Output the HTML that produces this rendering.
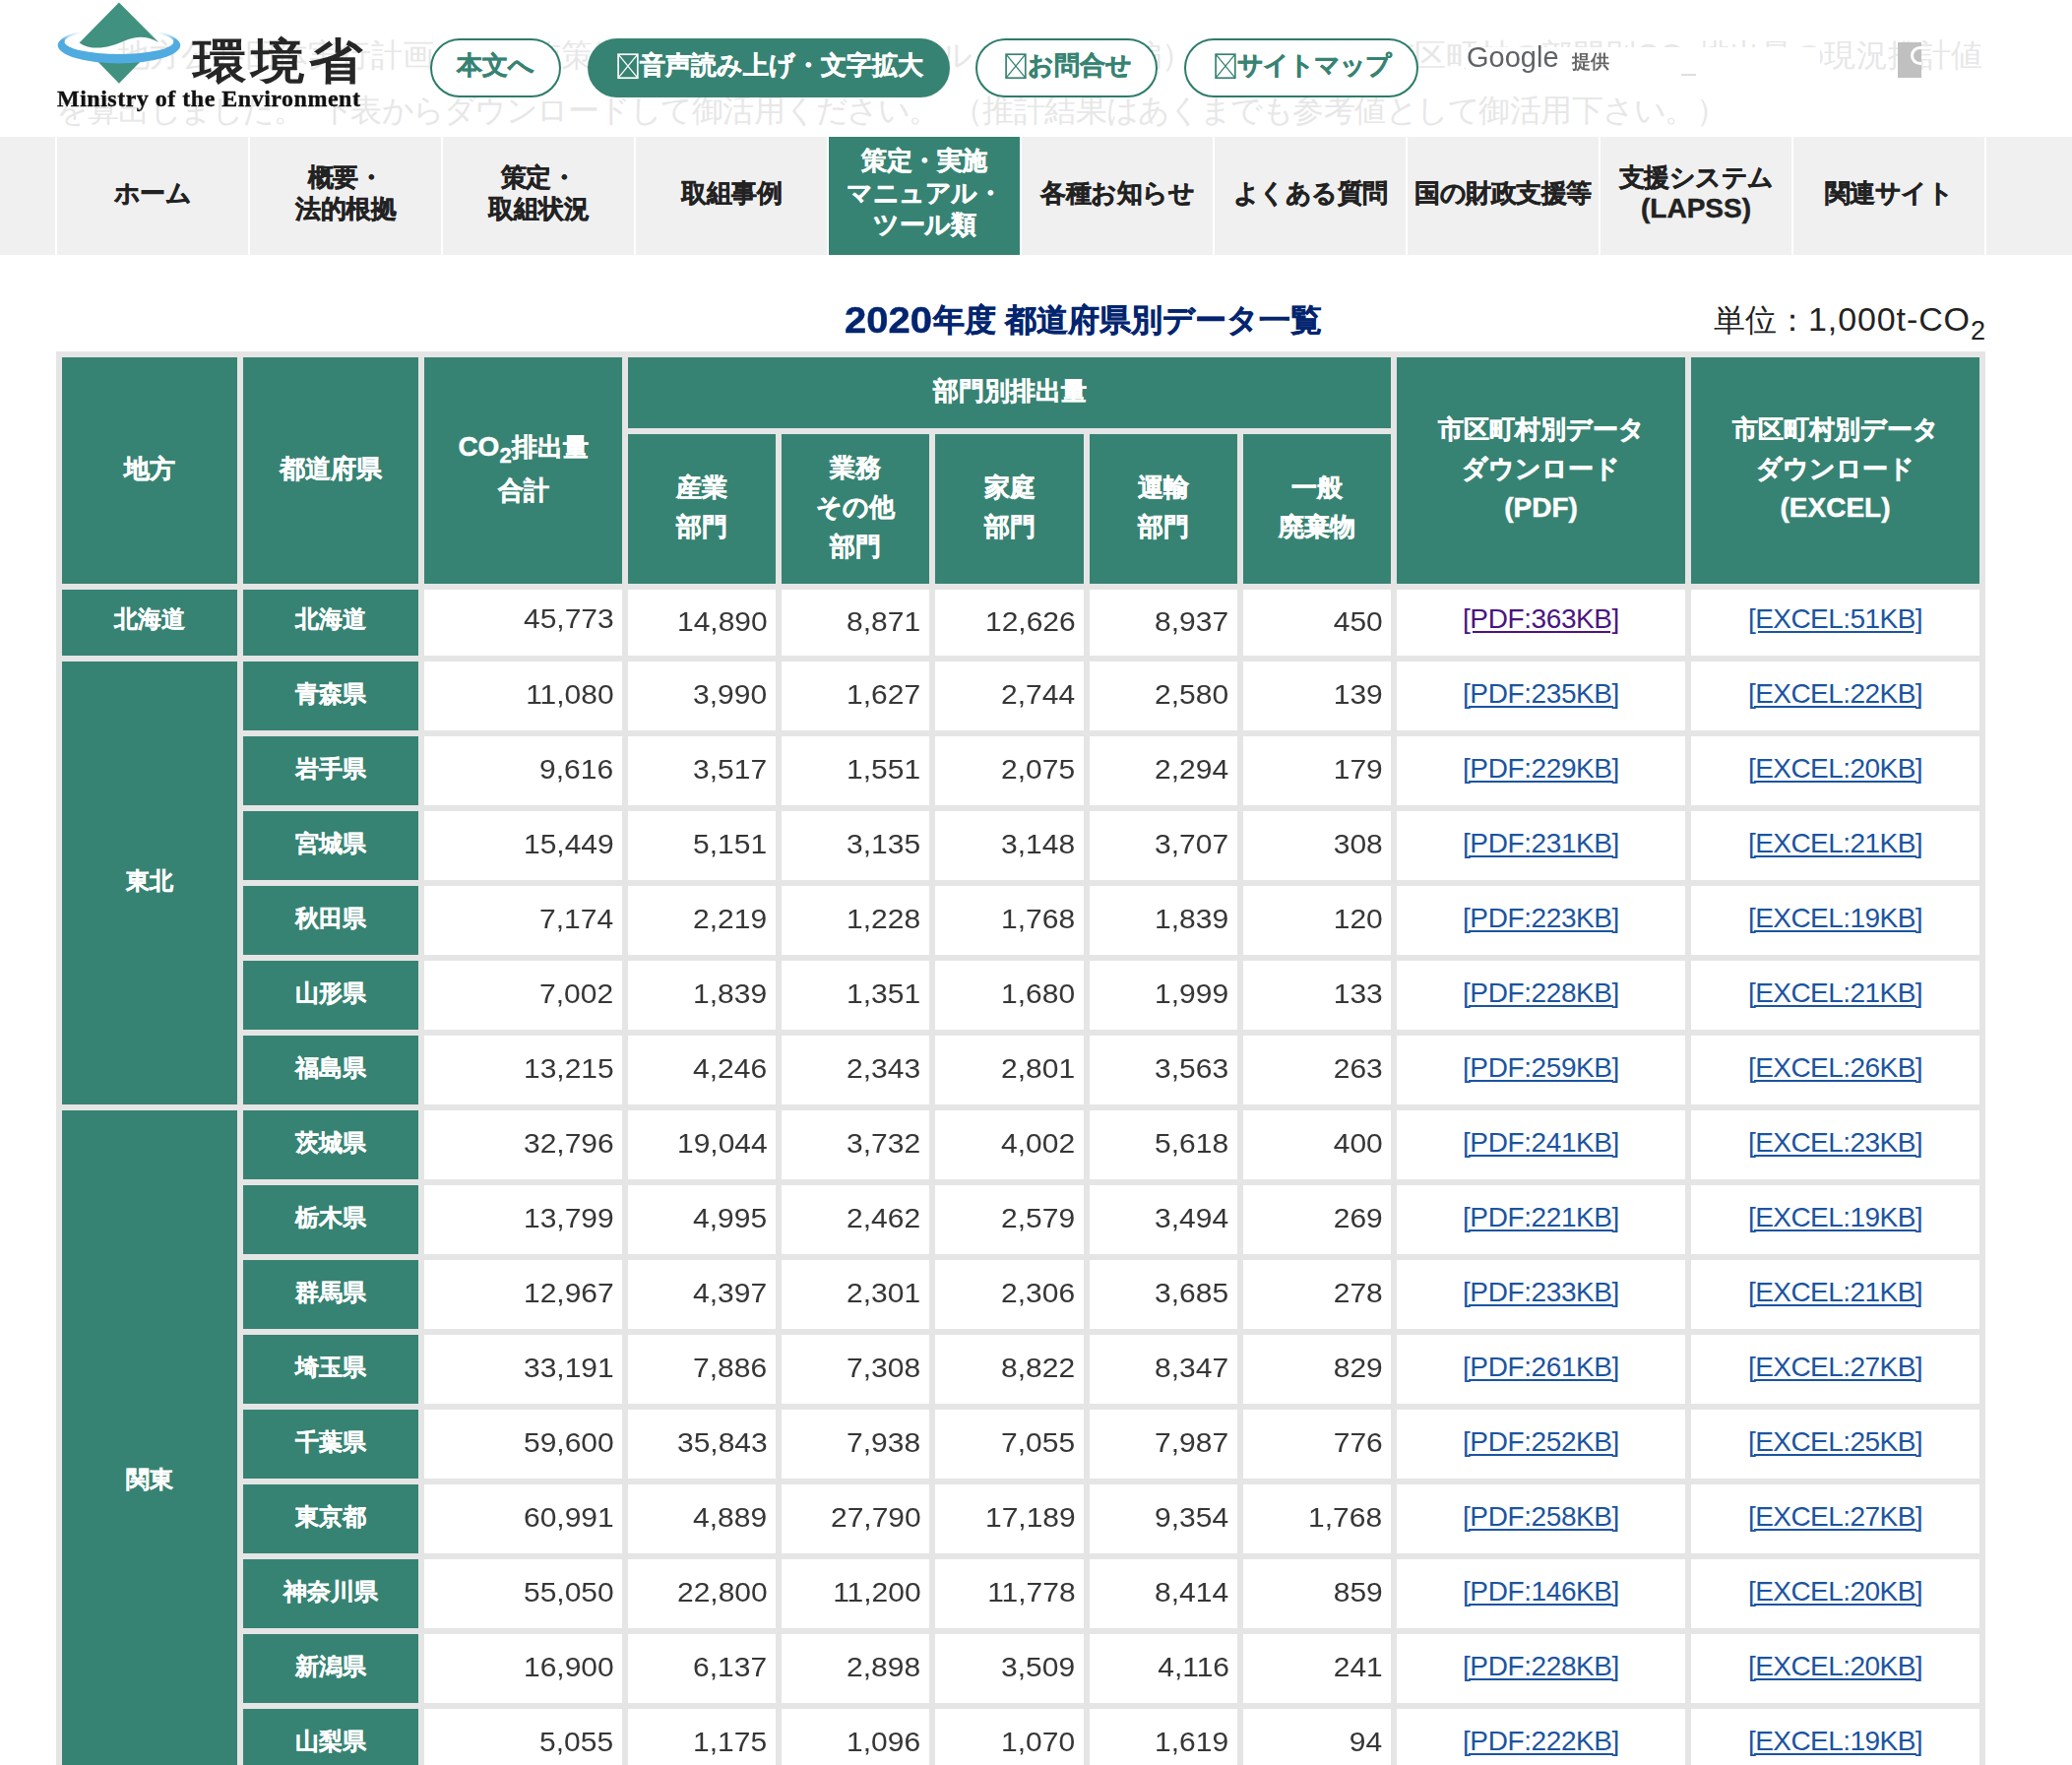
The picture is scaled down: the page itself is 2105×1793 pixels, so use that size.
<!DOCTYPE html>
<html lang="ja"><head><meta charset="utf-8"><title>2020年度 都道府県別データ一覧</title>
<style>
*{box-sizing:border-box;margin:0;padding:0}
html,body{width:2105px;height:1793px;overflow:hidden;background:#fff}
body{position:relative;font-family:"Liberation Sans",sans-serif;color:#222}
#bg1,#bg2{position:absolute;font-size:32px;line-height:56px;height:56px;color:#e7e7e7;white-space:nowrap}
#bg1 i,#bg2 i{display:block;font-style:normal;text-align:center;flex:none}
#bg1{left:120px;top:28px;width:1894px;display:flex;justify-content:space-between}
#bg1 i{width:31.5px}
#bg1 i.la{width:23px}
#bg1 i.su{width:15px;font-size:24px;position:relative;top:7px}
#bg2{left:57px;top:84px;display:flex;font-size:31.5px}
#bg2 i{width:31.5px}
#bg2 i.hs{width:15.5px}
#bg2 i.gs{width:12px}
#sbox{position:absolute;left:1489px;top:48px;width:360px;height:36px;background:#fff}
#sbtn{position:absolute;left:1928px;top:43px;width:24px;height:36px;background:#c0c0c0;overflow:hidden}
#sbtn i{position:absolute;left:12.5px;top:3.8px;width:19.4px;height:19.4px;border:3.9px solid #fff;border-radius:50%}
#goog{position:absolute;left:1490px;top:36px;font-size:29px;line-height:44px;color:#5f6368;letter-spacing:0px;filter:blur(0.7px)}
#teikyo{position:absolute;left:1597px;top:51px;font-size:19px;line-height:24px;font-weight:bold;color:#666;filter:blur(0.6px)}
#logo{position:absolute;left:50px;top:0;width:150px;height:100px}
#kks{position:absolute;left:196px;top:27px;font-size:54px;line-height:70px;font-weight:bold;letter-spacing:5px;color:#262626;white-space:nowrap;transform-origin:0 50%;transform:scaleY(0.9);filter:blur(0.5px)}
#moe{position:absolute;left:58px;top:85.3px;font-family:"Liberation Serif",serif;font-weight:bold;font-size:24px;line-height:30px;color:#111;white-space:nowrap;letter-spacing:0.5px;-webkit-text-stroke:0.35px #111;filter:blur(0.4px)}
.btn{position:absolute;top:38.8px;height:59.9px;border:2px solid #2d7c6a;border-radius:30px;background:#fff;color:#378373;font-size:26px;font-weight:bold;line-height:50px;text-align:center;white-space:nowrap}
.btn.f{background:#378373;border-color:#378373;color:#fff}
.tofu{display:inline-block;vertical-align:-6px}
.btn,.ni,.h,#title{-webkit-text-stroke:0.45px currentColor}
.g{-webkit-text-stroke:0.3px currentColor}
#cur{position:absolute;left:1708px;top:75px;width:15px;height:1.5px;background:#dedede}
#nav{position:absolute;left:0;top:139px;width:2105px;height:120px;background:#f0f0f0}
#nav .sep{position:absolute;top:0;width:2px;height:120px;background:#fff}
.ni{position:absolute;top:0;width:194px;height:120px;display:flex;align-items:center;justify-content:center;text-align:center;font-size:26px;line-height:32.5px;font-weight:bold;color:#222;white-space:nowrap;letter-spacing:-0.5px}
.ni.act{background:#378373;color:#fff;left:842px}
.ni span{display:block;position:relative;top:-3px}
.ni b{font-size:28px;letter-spacing:0}
#title{position:absolute;left:858px;top:302px;height:46px;line-height:46px;font-size:32px;font-weight:bold;color:#03256f;white-space:nowrap}
#title b{display:inline-block;width:90px;height:46px;vertical-align:top}
#title b i{display:inline-block;font-style:normal;font-size:36px;transform:scaleX(1.11);transform-origin:0 50%;position:relative;top:1px}
#unit{position:absolute;right:88px;top:300.5px;height:46px;line-height:46px;font-size:32px;color:#222;white-space:nowrap}
#unit b{font-weight:normal;font-size:34px;letter-spacing:0.9px}
#unit sub{font-size:27px;vertical-align:-9px;line-height:0}
#tb{position:absolute;left:57px;top:357px;width:1960px;height:1600px;background:#e5e5e5}
.c{position:absolute;display:flex;align-items:center;justify-content:center;white-space:nowrap}
.h,.g{background:#378373;color:#fff;font-weight:bold;text-align:center}
.h{font-size:26px;line-height:40px}
.h span{display:block;position:relative;top:-2px}
.h.co2{line-height:44px}
.h b{font-size:28px}
.h sub{font-size:22px;vertical-align:-7px;line-height:0}
.g{font-size:24px;line-height:30px}
.g span{display:block;position:relative;top:-2px}
.g.r1 span{top:-4px}
.n{background:#fff;justify-content:flex-end;padding-right:8.5px;font-size:28px;line-height:34px;color:#363636}
.n span{display:block;position:relative;top:-1px;transform:scaleX(1.07);transform-origin:100% 50%}
.n.r1 span{top:-4px}
.l{background:#fff;font-size:28px;line-height:34px}
.l a{display:block;position:relative;top:-2.5px;color:#1b54a0;text-decoration:underline;text-decoration-thickness:2px;text-underline-offset:3px}
.l a.p{letter-spacing:-0.4px}
.l.r1 a{top:-3.5px}
.l a.x{letter-spacing:-0.55px}
.l a.v{color:#4a157f}
</style></head>
<body>
<div id="bg1"><i>地</i><i>方</i><i>公</i><i>共</i><i>団</i><i>体</i><i>実</i><i>行</i><i>計</i><i>画</i><i>（</i><i>区</i><i>域</i><i>施</i><i>策</i><i>編</i><i>）</i><i>策</i><i>定</i><i>・</i><i>実</i><i>施</i><i>マ</i><i>ニ</i><i>ュ</i><i>ア</i><i>ル</i><i>（</i><i>算</i><i>定</i><i>手</i><i>法</i><i>編</i><i>）</i><i>に</i><i>基</i><i>づ</i><i>き</i><i>、</i><i>全</i><i>市</i><i>区</i><i>町</i><i>村</i><i>の</i><i>部</i><i>門</i><i>別</i><i class="la">C</i><i class="la">O</i><i class="su">2</i><i>排</i><i>出</i><i>量</i><i>の</i><i>現</i><i>況</i><i>推</i><i>計</i><i>値</i></div>
<div id="bg2"><i>を</i><i>算</i><i>出</i><i>し</i><i>ま</i><i>し</i><i>た</i><i>。</i><i class="hs"></i><i>下</i><i>表</i><i>か</i><i>ら</i><i>ダ</i><i>ウ</i><i>ン</i><i>ロ</i><i>ー</i><i>ド</i><i>し</i><i>て</i><i>御</i><i>活</i><i>用</i><i>く</i><i>だ</i><i>さ</i><i>い</i><i>。</i><i class="gs"></i><i>（</i><i>推</i><i>計</i><i>結</i><i>果</i><i>は</i><i>あ</i><i>く</i><i>ま</i><i>で</i><i>も</i><i>参</i><i>考</i><i>値</i><i>と</i><i>し</i><i>て</i><i>御</i><i>活</i><i>用</i><i>下</i><i>さ</i><i>い</i><i>。</i><i>）</i></div>
<div id="sbox"></div>
<svg id="logo" viewBox="50 0 150 100">
<defs><linearGradient id="rg" gradientUnits="userSpaceOnUse" x1="0" y1="29" x2="0" y2="41"><stop offset="0" stop-color="#4fabe0" stop-opacity="0"/><stop offset="1" stop-color="#4fabe0" stop-opacity="1"/></linearGradient><linearGradient id="hg" gradientUnits="userSpaceOnUse" x1="64" y1="0" x2="178" y2="0"><stop offset="0" stop-color="#000" stop-opacity="0"/><stop offset="0.17" stop-color="#000" stop-opacity="1"/><stop offset="0.83" stop-color="#000" stop-opacity="1"/><stop offset="1" stop-color="#000" stop-opacity="0"/></linearGradient><mask id="mk" maskUnits="userSpaceOnUse" x="50" y="0" width="150" height="100"><rect x="50" y="0" width="150" height="100" fill="#fff"/><rect x="50" y="0" width="150" height="41" fill="url(#hg)"/></mask></defs>
<path d="M93 56L149 56L120.9 84.8Z" fill="#409180"/>
<path mask="url(#mk)" fill-rule="evenodd" fill="url(#rg)" d="M58.7 46a62.25 18.4 0 1 0 124.5 0a62.25 18.4 0 1 0 -124.5 0ZM65.6 42.5a55.35 12.5 0 1 0 110.7 0a55.35 12.5 0 1 0 -110.7 0Z"/>
<path d="M120.9 2.6L161.2 42.9C150 36.5 139 36.2 127 41.2C111 48.3 94 52.5 80.6 43.4Z" fill="#409180"/>
</svg>
<div id="kks">環境省</div>
<div id="moe">Ministry of the Environment</div>
<div class="btn" style="left:437px;width:133px">本文へ</div>
<div class="btn f" style="left:597px;width:368px"><svg class="tofu" width="26" height="27" viewBox="0 0 26 27"><g fill="none" stroke="currentColor" stroke-width="1.7"><rect x="4.1" y="1.2" width="19.7" height="24"/><path d="M4.1 1.2L23.8 25.2M23.8 1.2L4.1 25.2" stroke-width="1.3"/></g></svg>音声読み上げ・文字拡大</div>
<div class="btn" style="left:991px;width:185px"><svg class="tofu" width="26" height="27" viewBox="0 0 26 27"><g fill="none" stroke="currentColor" stroke-width="1.7"><rect x="4.1" y="1.2" width="19.7" height="24"/><path d="M4.1 1.2L23.8 25.2M23.8 1.2L4.1 25.2" stroke-width="1.3"/></g></svg>お問合せ</div>
<div class="btn" style="left:1203px;width:238px;letter-spacing:-1.1px"><svg class="tofu" width="26" height="27" viewBox="0 0 26 27"><g fill="none" stroke="currentColor" stroke-width="1.7"><rect x="4.1" y="1.2" width="19.7" height="24"/><path d="M4.1 1.2L23.8 25.2M23.8 1.2L4.1 25.2" stroke-width="1.3"/></g></svg>サイトマップ</div>
<div id="cur"></div>
<div id="goog">Google</div>
<div id="teikyo">提供</div>
<div id="sbtn"><i></i></div>
<div id="nav">
<div class="sep" style="left:56px"></div>
<div class="sep" style="left:252px"></div>
<div class="sep" style="left:448px"></div>
<div class="sep" style="left:644px"></div>
<div class="sep" style="left:840px"></div>
<div class="sep" style="left:1036px"></div>
<div class="sep" style="left:1232px"></div>
<div class="sep" style="left:1428px"></div>
<div class="sep" style="left:1624px"></div>
<div class="sep" style="left:1820px"></div>
<div class="sep" style="left:2016px"></div>
<div class="ni" style="left:58px"><span>ホーム</span></div>
<div class="ni" style="left:254px"><span>概要・<br>法的根拠</span></div>
<div class="ni" style="left:450px"><span>策定・<br>取組状況</span></div>
<div class="ni" style="left:646px"><span>取組事例</span></div>
<div class="ni act" style="left:842px"><span>策定・実施<br>マニュアル・<br>ツール類</span></div>
<div class="ni" style="left:1038px"><span>各種お知らせ</span></div>
<div class="ni" style="left:1234px"><span>よくある質問</span></div>
<div class="ni" style="left:1430px"><span>国の財政支援等</span></div>
<div class="ni" style="left:1626px"><span>支援システム<br><b>(LAPSS)</b></span></div>
<div class="ni" style="left:1822px"><span>関連サイト</span></div>
</div>
<div id="title"><b><i>2020</i></b>年度 都道府県別データ一覧</div>
<div id="unit">単位：<b>1,000t-CO</b><sub>2</sub></div>
<div id="tb"></div>
<div class="c h" style="left:63px;top:363px;width:178px;height:230px;"><span>地方</span></div>
<div class="c h" style="left:247px;top:363px;width:178px;height:230px;"><span>都道府県</span></div>
<div class="c h co2" style="left:431px;top:363px;width:201px;height:230px;"><span><b>CO</b><sub>2</sub>排出量<br>合計</span></div>
<div class="c h" style="left:638px;top:363px;width:775px;height:72px;"><span>部門別排出量</span></div>
<div class="c h" style="left:638px;top:441px;width:150px;height:152px;"><span>産業<br>部門</span></div>
<div class="c h" style="left:794px;top:441px;width:150px;height:152px;"><span>業務<br>その他<br>部門</span></div>
<div class="c h" style="left:950px;top:441px;width:151px;height:152px;"><span>家庭<br>部門</span></div>
<div class="c h" style="left:1107px;top:441px;width:150px;height:152px;"><span>運輸<br>部門</span></div>
<div class="c h" style="left:1263px;top:441px;width:150px;height:152px;"><span>一般<br>廃棄物</span></div>
<div class="c h" style="left:1419px;top:363px;width:293px;height:230px;"><span>市区町村別データ<br>ダウンロード<br><b>(PDF)</b></span></div>
<div class="c h" style="left:1718px;top:363px;width:293px;height:230px;"><span>市区町村別データ<br>ダウンロード<br><b>(EXCEL)</b></span></div>
<div class="c g r1" style="left:63px;top:599px;width:178px;height:67px;"><span>北海道</span></div>
<div class="c g" style="left:63px;top:672px;width:178px;height:450px;"><span>東北</span></div>
<div class="c g" style="left:63px;top:1128px;width:178px;height:754px;"><span>関東</span></div>
<div class="c g r1" style="left:247px;top:599px;width:178px;height:67px;"><span>北海道</span></div>
<div class="c n r1" style="left:431px;top:599px;width:201px;height:67px;"><span>45,773</span></div>
<div class="c n" style="left:638px;top:599px;width:150px;height:67px;"><span>14,890</span></div>
<div class="c n" style="left:794px;top:599px;width:150px;height:67px;"><span>8,871</span></div>
<div class="c n" style="left:950px;top:599px;width:151px;height:67px;"><span>12,626</span></div>
<div class="c n" style="left:1107px;top:599px;width:150px;height:67px;"><span>8,937</span></div>
<div class="c n" style="left:1263px;top:599px;width:150px;height:67px;"><span>450</span></div>
<div class="c l r1" style="left:1419px;top:599px;width:293px;height:67px;"><a class="p v">[PDF:363KB]</a></div>
<div class="c l r1" style="left:1718px;top:599px;width:293px;height:67px;"><a class="x">[EXCEL:51KB]</a></div>
<div class="c g" style="left:247px;top:672px;width:178px;height:70px;"><span>青森県</span></div>
<div class="c n" style="left:431px;top:672px;width:201px;height:70px;"><span>11,080</span></div>
<div class="c n" style="left:638px;top:672px;width:150px;height:70px;"><span>3,990</span></div>
<div class="c n" style="left:794px;top:672px;width:150px;height:70px;"><span>1,627</span></div>
<div class="c n" style="left:950px;top:672px;width:151px;height:70px;"><span>2,744</span></div>
<div class="c n" style="left:1107px;top:672px;width:150px;height:70px;"><span>2,580</span></div>
<div class="c n" style="left:1263px;top:672px;width:150px;height:70px;"><span>139</span></div>
<div class="c l" style="left:1419px;top:672px;width:293px;height:70px;"><a class="p">[PDF:235KB]</a></div>
<div class="c l" style="left:1718px;top:672px;width:293px;height:70px;"><a class="x">[EXCEL:22KB]</a></div>
<div class="c g" style="left:247px;top:748px;width:178px;height:70px;"><span>岩手県</span></div>
<div class="c n" style="left:431px;top:748px;width:201px;height:70px;"><span>9,616</span></div>
<div class="c n" style="left:638px;top:748px;width:150px;height:70px;"><span>3,517</span></div>
<div class="c n" style="left:794px;top:748px;width:150px;height:70px;"><span>1,551</span></div>
<div class="c n" style="left:950px;top:748px;width:151px;height:70px;"><span>2,075</span></div>
<div class="c n" style="left:1107px;top:748px;width:150px;height:70px;"><span>2,294</span></div>
<div class="c n" style="left:1263px;top:748px;width:150px;height:70px;"><span>179</span></div>
<div class="c l" style="left:1419px;top:748px;width:293px;height:70px;"><a class="p">[PDF:229KB]</a></div>
<div class="c l" style="left:1718px;top:748px;width:293px;height:70px;"><a class="x">[EXCEL:20KB]</a></div>
<div class="c g" style="left:247px;top:824px;width:178px;height:70px;"><span>宮城県</span></div>
<div class="c n" style="left:431px;top:824px;width:201px;height:70px;"><span>15,449</span></div>
<div class="c n" style="left:638px;top:824px;width:150px;height:70px;"><span>5,151</span></div>
<div class="c n" style="left:794px;top:824px;width:150px;height:70px;"><span>3,135</span></div>
<div class="c n" style="left:950px;top:824px;width:151px;height:70px;"><span>3,148</span></div>
<div class="c n" style="left:1107px;top:824px;width:150px;height:70px;"><span>3,707</span></div>
<div class="c n" style="left:1263px;top:824px;width:150px;height:70px;"><span>308</span></div>
<div class="c l" style="left:1419px;top:824px;width:293px;height:70px;"><a class="p">[PDF:231KB]</a></div>
<div class="c l" style="left:1718px;top:824px;width:293px;height:70px;"><a class="x">[EXCEL:21KB]</a></div>
<div class="c g" style="left:247px;top:900px;width:178px;height:70px;"><span>秋田県</span></div>
<div class="c n" style="left:431px;top:900px;width:201px;height:70px;"><span>7,174</span></div>
<div class="c n" style="left:638px;top:900px;width:150px;height:70px;"><span>2,219</span></div>
<div class="c n" style="left:794px;top:900px;width:150px;height:70px;"><span>1,228</span></div>
<div class="c n" style="left:950px;top:900px;width:151px;height:70px;"><span>1,768</span></div>
<div class="c n" style="left:1107px;top:900px;width:150px;height:70px;"><span>1,839</span></div>
<div class="c n" style="left:1263px;top:900px;width:150px;height:70px;"><span>120</span></div>
<div class="c l" style="left:1419px;top:900px;width:293px;height:70px;"><a class="p">[PDF:223KB]</a></div>
<div class="c l" style="left:1718px;top:900px;width:293px;height:70px;"><a class="x">[EXCEL:19KB]</a></div>
<div class="c g" style="left:247px;top:976px;width:178px;height:70px;"><span>山形県</span></div>
<div class="c n" style="left:431px;top:976px;width:201px;height:70px;"><span>7,002</span></div>
<div class="c n" style="left:638px;top:976px;width:150px;height:70px;"><span>1,839</span></div>
<div class="c n" style="left:794px;top:976px;width:150px;height:70px;"><span>1,351</span></div>
<div class="c n" style="left:950px;top:976px;width:151px;height:70px;"><span>1,680</span></div>
<div class="c n" style="left:1107px;top:976px;width:150px;height:70px;"><span>1,999</span></div>
<div class="c n" style="left:1263px;top:976px;width:150px;height:70px;"><span>133</span></div>
<div class="c l" style="left:1419px;top:976px;width:293px;height:70px;"><a class="p">[PDF:228KB]</a></div>
<div class="c l" style="left:1718px;top:976px;width:293px;height:70px;"><a class="x">[EXCEL:21KB]</a></div>
<div class="c g" style="left:247px;top:1052px;width:178px;height:70px;"><span>福島県</span></div>
<div class="c n" style="left:431px;top:1052px;width:201px;height:70px;"><span>13,215</span></div>
<div class="c n" style="left:638px;top:1052px;width:150px;height:70px;"><span>4,246</span></div>
<div class="c n" style="left:794px;top:1052px;width:150px;height:70px;"><span>2,343</span></div>
<div class="c n" style="left:950px;top:1052px;width:151px;height:70px;"><span>2,801</span></div>
<div class="c n" style="left:1107px;top:1052px;width:150px;height:70px;"><span>3,563</span></div>
<div class="c n" style="left:1263px;top:1052px;width:150px;height:70px;"><span>263</span></div>
<div class="c l" style="left:1419px;top:1052px;width:293px;height:70px;"><a class="p">[PDF:259KB]</a></div>
<div class="c l" style="left:1718px;top:1052px;width:293px;height:70px;"><a class="x">[EXCEL:26KB]</a></div>
<div class="c g" style="left:247px;top:1128px;width:178px;height:70px;"><span>茨城県</span></div>
<div class="c n" style="left:431px;top:1128px;width:201px;height:70px;"><span>32,796</span></div>
<div class="c n" style="left:638px;top:1128px;width:150px;height:70px;"><span>19,044</span></div>
<div class="c n" style="left:794px;top:1128px;width:150px;height:70px;"><span>3,732</span></div>
<div class="c n" style="left:950px;top:1128px;width:151px;height:70px;"><span>4,002</span></div>
<div class="c n" style="left:1107px;top:1128px;width:150px;height:70px;"><span>5,618</span></div>
<div class="c n" style="left:1263px;top:1128px;width:150px;height:70px;"><span>400</span></div>
<div class="c l" style="left:1419px;top:1128px;width:293px;height:70px;"><a class="p">[PDF:241KB]</a></div>
<div class="c l" style="left:1718px;top:1128px;width:293px;height:70px;"><a class="x">[EXCEL:23KB]</a></div>
<div class="c g" style="left:247px;top:1204px;width:178px;height:70px;"><span>栃木県</span></div>
<div class="c n" style="left:431px;top:1204px;width:201px;height:70px;"><span>13,799</span></div>
<div class="c n" style="left:638px;top:1204px;width:150px;height:70px;"><span>4,995</span></div>
<div class="c n" style="left:794px;top:1204px;width:150px;height:70px;"><span>2,462</span></div>
<div class="c n" style="left:950px;top:1204px;width:151px;height:70px;"><span>2,579</span></div>
<div class="c n" style="left:1107px;top:1204px;width:150px;height:70px;"><span>3,494</span></div>
<div class="c n" style="left:1263px;top:1204px;width:150px;height:70px;"><span>269</span></div>
<div class="c l" style="left:1419px;top:1204px;width:293px;height:70px;"><a class="p">[PDF:221KB]</a></div>
<div class="c l" style="left:1718px;top:1204px;width:293px;height:70px;"><a class="x">[EXCEL:19KB]</a></div>
<div class="c g" style="left:247px;top:1280px;width:178px;height:70px;"><span>群馬県</span></div>
<div class="c n" style="left:431px;top:1280px;width:201px;height:70px;"><span>12,967</span></div>
<div class="c n" style="left:638px;top:1280px;width:150px;height:70px;"><span>4,397</span></div>
<div class="c n" style="left:794px;top:1280px;width:150px;height:70px;"><span>2,301</span></div>
<div class="c n" style="left:950px;top:1280px;width:151px;height:70px;"><span>2,306</span></div>
<div class="c n" style="left:1107px;top:1280px;width:150px;height:70px;"><span>3,685</span></div>
<div class="c n" style="left:1263px;top:1280px;width:150px;height:70px;"><span>278</span></div>
<div class="c l" style="left:1419px;top:1280px;width:293px;height:70px;"><a class="p">[PDF:233KB]</a></div>
<div class="c l" style="left:1718px;top:1280px;width:293px;height:70px;"><a class="x">[EXCEL:21KB]</a></div>
<div class="c g" style="left:247px;top:1356px;width:178px;height:70px;"><span>埼玉県</span></div>
<div class="c n" style="left:431px;top:1356px;width:201px;height:70px;"><span>33,191</span></div>
<div class="c n" style="left:638px;top:1356px;width:150px;height:70px;"><span>7,886</span></div>
<div class="c n" style="left:794px;top:1356px;width:150px;height:70px;"><span>7,308</span></div>
<div class="c n" style="left:950px;top:1356px;width:151px;height:70px;"><span>8,822</span></div>
<div class="c n" style="left:1107px;top:1356px;width:150px;height:70px;"><span>8,347</span></div>
<div class="c n" style="left:1263px;top:1356px;width:150px;height:70px;"><span>829</span></div>
<div class="c l" style="left:1419px;top:1356px;width:293px;height:70px;"><a class="p">[PDF:261KB]</a></div>
<div class="c l" style="left:1718px;top:1356px;width:293px;height:70px;"><a class="x">[EXCEL:27KB]</a></div>
<div class="c g" style="left:247px;top:1432px;width:178px;height:70px;"><span>千葉県</span></div>
<div class="c n" style="left:431px;top:1432px;width:201px;height:70px;"><span>59,600</span></div>
<div class="c n" style="left:638px;top:1432px;width:150px;height:70px;"><span>35,843</span></div>
<div class="c n" style="left:794px;top:1432px;width:150px;height:70px;"><span>7,938</span></div>
<div class="c n" style="left:950px;top:1432px;width:151px;height:70px;"><span>7,055</span></div>
<div class="c n" style="left:1107px;top:1432px;width:150px;height:70px;"><span>7,987</span></div>
<div class="c n" style="left:1263px;top:1432px;width:150px;height:70px;"><span>776</span></div>
<div class="c l" style="left:1419px;top:1432px;width:293px;height:70px;"><a class="p">[PDF:252KB]</a></div>
<div class="c l" style="left:1718px;top:1432px;width:293px;height:70px;"><a class="x">[EXCEL:25KB]</a></div>
<div class="c g" style="left:247px;top:1508px;width:178px;height:70px;"><span>東京都</span></div>
<div class="c n" style="left:431px;top:1508px;width:201px;height:70px;"><span>60,991</span></div>
<div class="c n" style="left:638px;top:1508px;width:150px;height:70px;"><span>4,889</span></div>
<div class="c n" style="left:794px;top:1508px;width:150px;height:70px;"><span>27,790</span></div>
<div class="c n" style="left:950px;top:1508px;width:151px;height:70px;"><span>17,189</span></div>
<div class="c n" style="left:1107px;top:1508px;width:150px;height:70px;"><span>9,354</span></div>
<div class="c n" style="left:1263px;top:1508px;width:150px;height:70px;"><span>1,768</span></div>
<div class="c l" style="left:1419px;top:1508px;width:293px;height:70px;"><a class="p">[PDF:258KB]</a></div>
<div class="c l" style="left:1718px;top:1508px;width:293px;height:70px;"><a class="x">[EXCEL:27KB]</a></div>
<div class="c g" style="left:247px;top:1584px;width:178px;height:70px;"><span>神奈川県</span></div>
<div class="c n" style="left:431px;top:1584px;width:201px;height:70px;"><span>55,050</span></div>
<div class="c n" style="left:638px;top:1584px;width:150px;height:70px;"><span>22,800</span></div>
<div class="c n" style="left:794px;top:1584px;width:150px;height:70px;"><span>11,200</span></div>
<div class="c n" style="left:950px;top:1584px;width:151px;height:70px;"><span>11,778</span></div>
<div class="c n" style="left:1107px;top:1584px;width:150px;height:70px;"><span>8,414</span></div>
<div class="c n" style="left:1263px;top:1584px;width:150px;height:70px;"><span>859</span></div>
<div class="c l" style="left:1419px;top:1584px;width:293px;height:70px;"><a class="p">[PDF:146KB]</a></div>
<div class="c l" style="left:1718px;top:1584px;width:293px;height:70px;"><a class="x">[EXCEL:20KB]</a></div>
<div class="c g" style="left:247px;top:1660px;width:178px;height:70px;"><span>新潟県</span></div>
<div class="c n" style="left:431px;top:1660px;width:201px;height:70px;"><span>16,900</span></div>
<div class="c n" style="left:638px;top:1660px;width:150px;height:70px;"><span>6,137</span></div>
<div class="c n" style="left:794px;top:1660px;width:150px;height:70px;"><span>2,898</span></div>
<div class="c n" style="left:950px;top:1660px;width:151px;height:70px;"><span>3,509</span></div>
<div class="c n" style="left:1107px;top:1660px;width:150px;height:70px;"><span>4,116</span></div>
<div class="c n" style="left:1263px;top:1660px;width:150px;height:70px;"><span>241</span></div>
<div class="c l" style="left:1419px;top:1660px;width:293px;height:70px;"><a class="p">[PDF:228KB]</a></div>
<div class="c l" style="left:1718px;top:1660px;width:293px;height:70px;"><a class="x">[EXCEL:20KB]</a></div>
<div class="c g" style="left:247px;top:1736px;width:178px;height:70px;"><span>山梨県</span></div>
<div class="c n" style="left:431px;top:1736px;width:201px;height:70px;"><span>5,055</span></div>
<div class="c n" style="left:638px;top:1736px;width:150px;height:70px;"><span>1,175</span></div>
<div class="c n" style="left:794px;top:1736px;width:150px;height:70px;"><span>1,096</span></div>
<div class="c n" style="left:950px;top:1736px;width:151px;height:70px;"><span>1,070</span></div>
<div class="c n" style="left:1107px;top:1736px;width:150px;height:70px;"><span>1,619</span></div>
<div class="c n" style="left:1263px;top:1736px;width:150px;height:70px;"><span>94</span></div>
<div class="c l" style="left:1419px;top:1736px;width:293px;height:70px;"><a class="p">[PDF:222KB]</a></div>
<div class="c l" style="left:1718px;top:1736px;width:293px;height:70px;"><a class="x">[EXCEL:19KB]</a></div>
</body></html>
